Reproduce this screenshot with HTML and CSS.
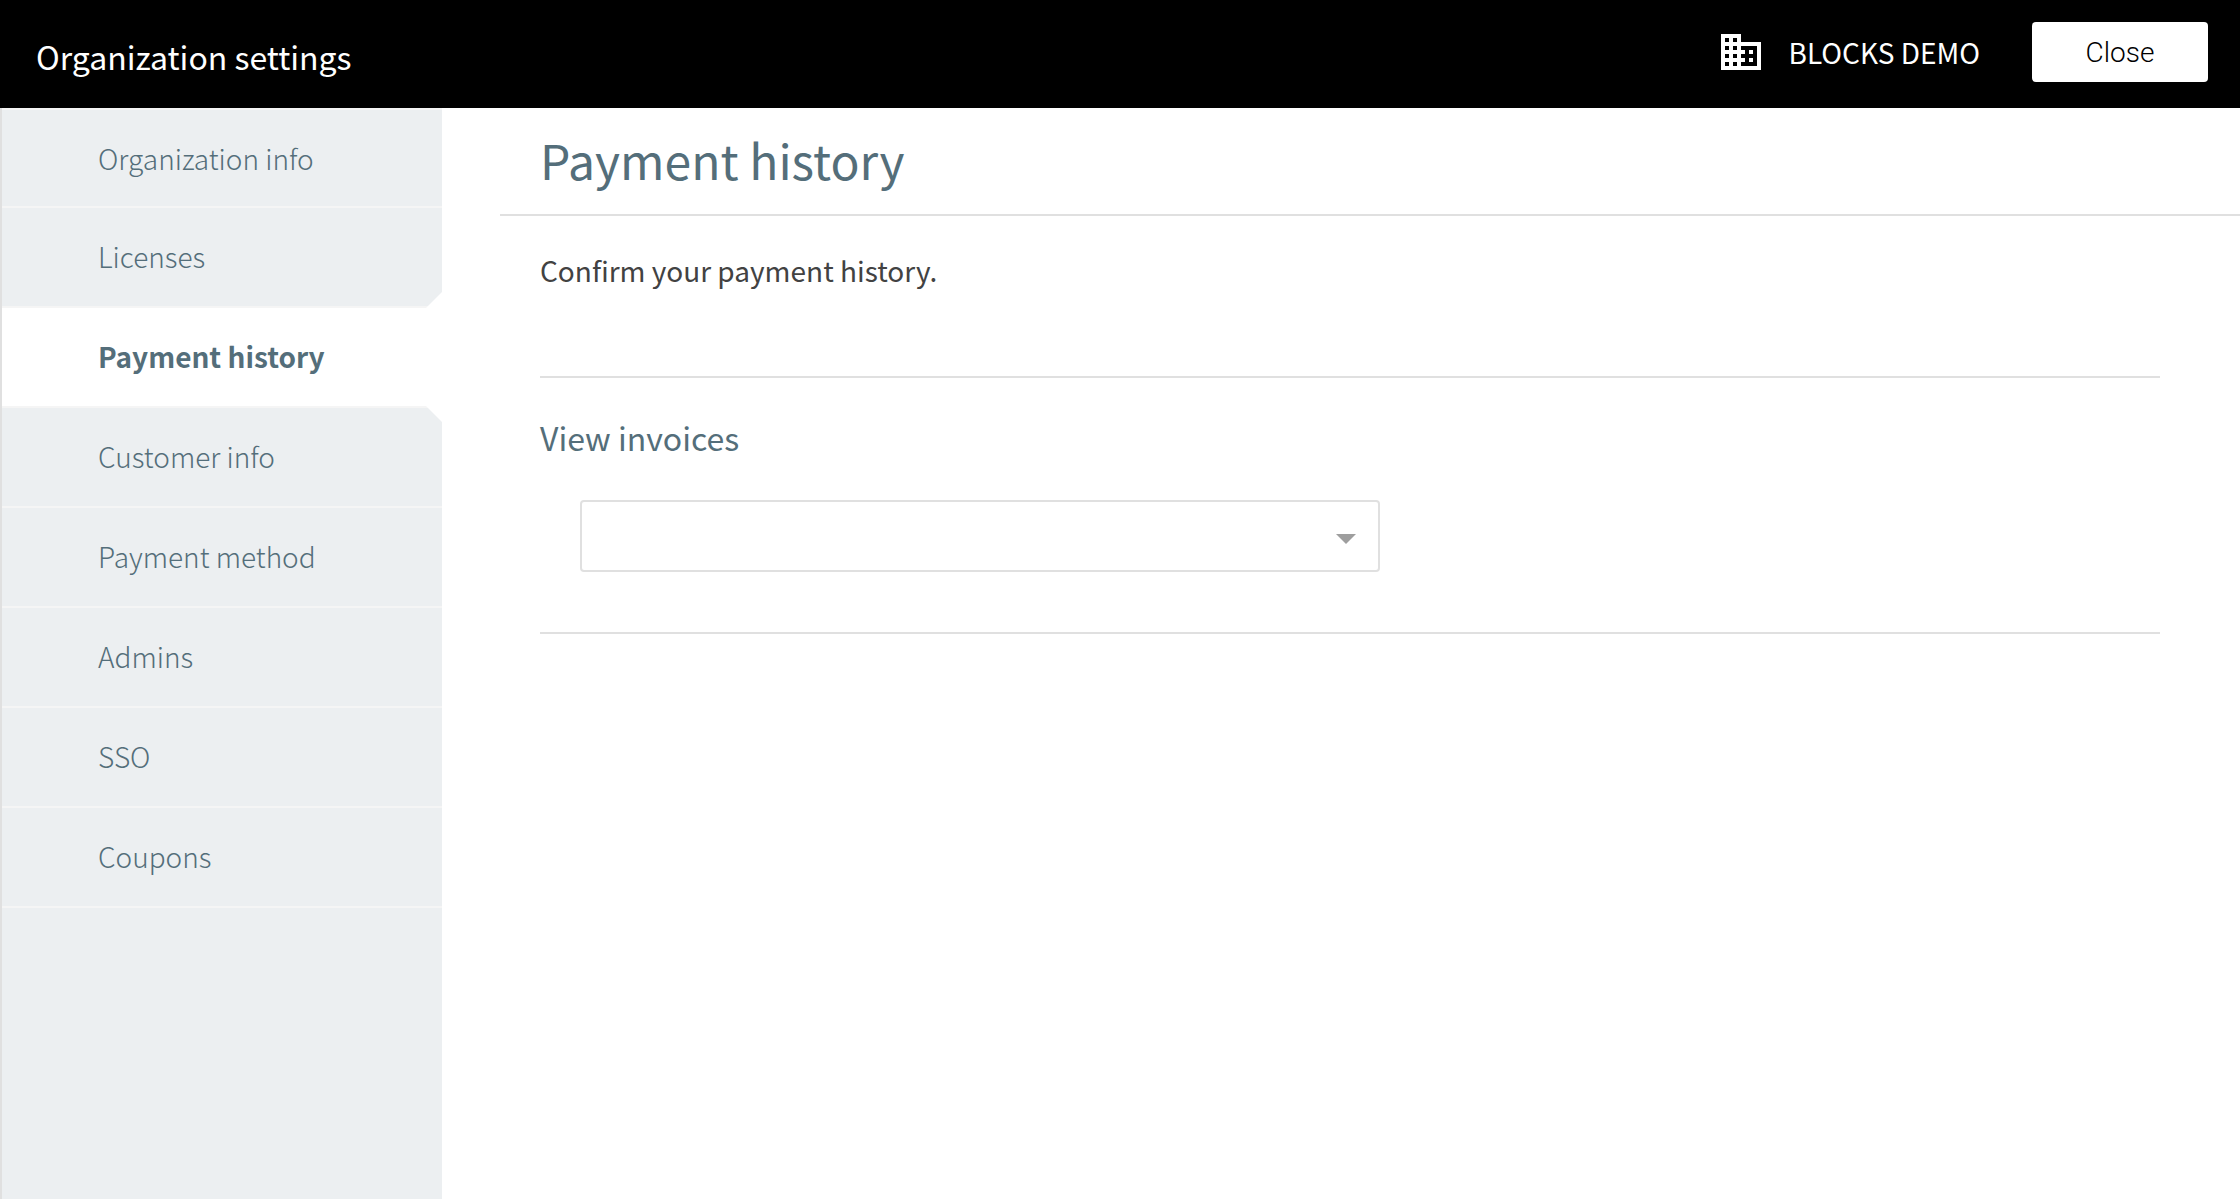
FILE: index.html
```html
<!DOCTYPE html>
<html lang="en">
<head>
    <meta charset="UTF-8">
    <meta name="viewport" content="width=device-width, initial-scale=1.0">
    <title>Organization settings</title>
    <link rel="stylesheet" href="styles.css">
</head>
<body>

<header class="topbar">
    <div class="topbar-title">Organization settings</div>
    <div class="organization">
        <svg class="organization-icon" viewBox="0 0 24 24" aria-hidden="true">
            <path d="M12 7V3H2v18h20V7H12zM6 19H4v-2h2v2zm0-4H4v-2h2v2zm0-4H4V9h2v2zm0-4H4V5h2v2zm4 12H8v-2h2v2zm0-4H8v-2h2v2zm0-4H8V9h2v2zm0-4H8V5h2v2zm10 12h-8v-2h2v-2h-2v-2h2v-2h-2V9h8v10zm-2-8h-2v2h2v-2zm0 4h-2v2h2v-2z"/>
        </svg>
        <span class="organization-name">BLOCKS DEMO</span>
    </div>
    <button class="close-button" type="button">Close</button>
</header>

<div class="layout">
    <nav class="sidebar">
        <ul class="menu">
            <li class="menu-item"><a href="#info">Organization info</a></li>
            <li class="menu-item"><a href="#licenses">Licenses</a></li>
            <li class="menu-item active"><a href="#payment-history" aria-current="page">Payment history</a></li>
            <li class="menu-item"><a href="#customer">Customer info</a></li>
            <li class="menu-item"><a href="#payment-method">Payment method</a></li>
            <li class="menu-item"><a href="#admins">Admins</a></li>
            <li class="menu-item"><a href="#sso">SSO</a></li>
            <li class="menu-item"><a href="#coupons">Coupons</a></li>
        </ul>
    </nav>

    <main class="content">
        <h1 class="page-title">Payment history</h1>
        <div class="page-body">
            <p class="description">Confirm your payment history.</p>
            <section class="invoices">
                <h2><label for="invoice">View invoices</label></h2>
                <select class="invoice-select" id="invoice">
                    <option value=""></option>
                </select>
            </section>
        </div>
    </main>
</div>

</body>
</html>
```
FILE: styles.css
```css
* {
    box-sizing: border-box;
}

body {
    margin: 0;
    min-height: 100vh;
    display: flex;
    flex-direction: column;
    font-family: "Noto Sans CJK JP", "Noto Sans", sans-serif;
    font-size: 28px;
    line-height: 40px;
    color: #424242;
    background: #fff;
}

.topbar {
    display: flex;
    align-items: center;
    height: 108px;
    padding: 0 32px 4px 36px;
    background: #000;
    color: #fff;
}

.topbar-title {
    flex: 1;
    padding-top: 8px;
    font-size: 32px;
}

.organization {
    display: flex;
    align-items: center;
    gap: 24px;
    margin-right: 52px;
}

.organization-icon {
    width: 48px;
    height: 48px;
    fill: #fff;
}

.close-button {
    width: 176px;
    height: 60px;
    padding: 0;
    border: none;
    border-radius: 4px;
    background: #fff;
    color: #000;
    font-family: Roboto, sans-serif;
    font-size: 28px;
    font-weight: 300;
    cursor: pointer;
}

.layout {
    flex: 1;
    display: flex;
}

.sidebar {
    flex: 0 0 442px;
    border-left: 2px solid #e0e0e0;
    background: #eceff1;
}

.menu {
    margin: 0;
    padding: 0;
    list-style: none;
    border-top: 2px solid #f5f5f5;
}

.menu-item {
    position: relative;
    border-bottom: 2px solid #f5f5f5;
}

.menu-item a {
    display: block;
    padding: 28px 16px 30px 96px;
    color: #546e7a;
    font-weight: 300;
    text-decoration: none;
}

.menu-item:first-child a {
    padding-bottom: 28px;
}

.menu-item.active {
    background: #fff;
}

.menu-item.active a {
    font-weight: 700;
}

/* Cut corners above and below the selected item */
.menu-item.active::before,
.menu-item.active::after {
    content: "";
    position: absolute;
    right: 0;
    width: 16px;
    height: 16px;
    background: #fff;
}

.menu-item.active::before {
    bottom: 100%;
    clip-path: polygon(100% 0, 100% 100%, 0 100%);
}

.menu-item.active::after {
    top: 100%;
    z-index: 1;
    clip-path: polygon(0 0, 100% 0, 100% 100%);
}

.content {
    flex: 1;
    padding-left: 58px;
}

.page-title {
    margin: 0;
    padding: 16px 40px 20px;
    border-bottom: 2px solid #e0e0e0;
    color: #546e7a;
    font-size: 48px;
    font-weight: 400;
    line-height: 70px;
}

.page-body {
    padding: 34px 80px 0 40px;
}

.description {
    margin: 0 0 86px;
}

.invoices {
    padding: 36px 0 60px;
    border-top: 2px solid #e0e0e0;
    border-bottom: 2px solid #e0e0e0;
}

.invoices h2 {
    margin: 0 0 40px;
    color: #546e7a;
    font-size: 32px;
    font-weight: 400;
    line-height: 46px;
}

.invoice-select {
    display: block;
    width: 800px;
    max-width: 100%;
    height: 72px;
    margin-left: 40px;
    padding: 0 60px 0 20px;
    border: 2px solid #e0e0e0;
    border-radius: 4px;
    appearance: none;
    background: #fff url("data:image/svg+xml,%3Csvg xmlns='http://www.w3.org/2000/svg' width='20' height='10'%3E%3Cpath d='M0 0h20L10 10z' fill='%239e9e9e'/%3E%3C/svg%3E") no-repeat right 22px top 32px;
    font: inherit;
}
```
